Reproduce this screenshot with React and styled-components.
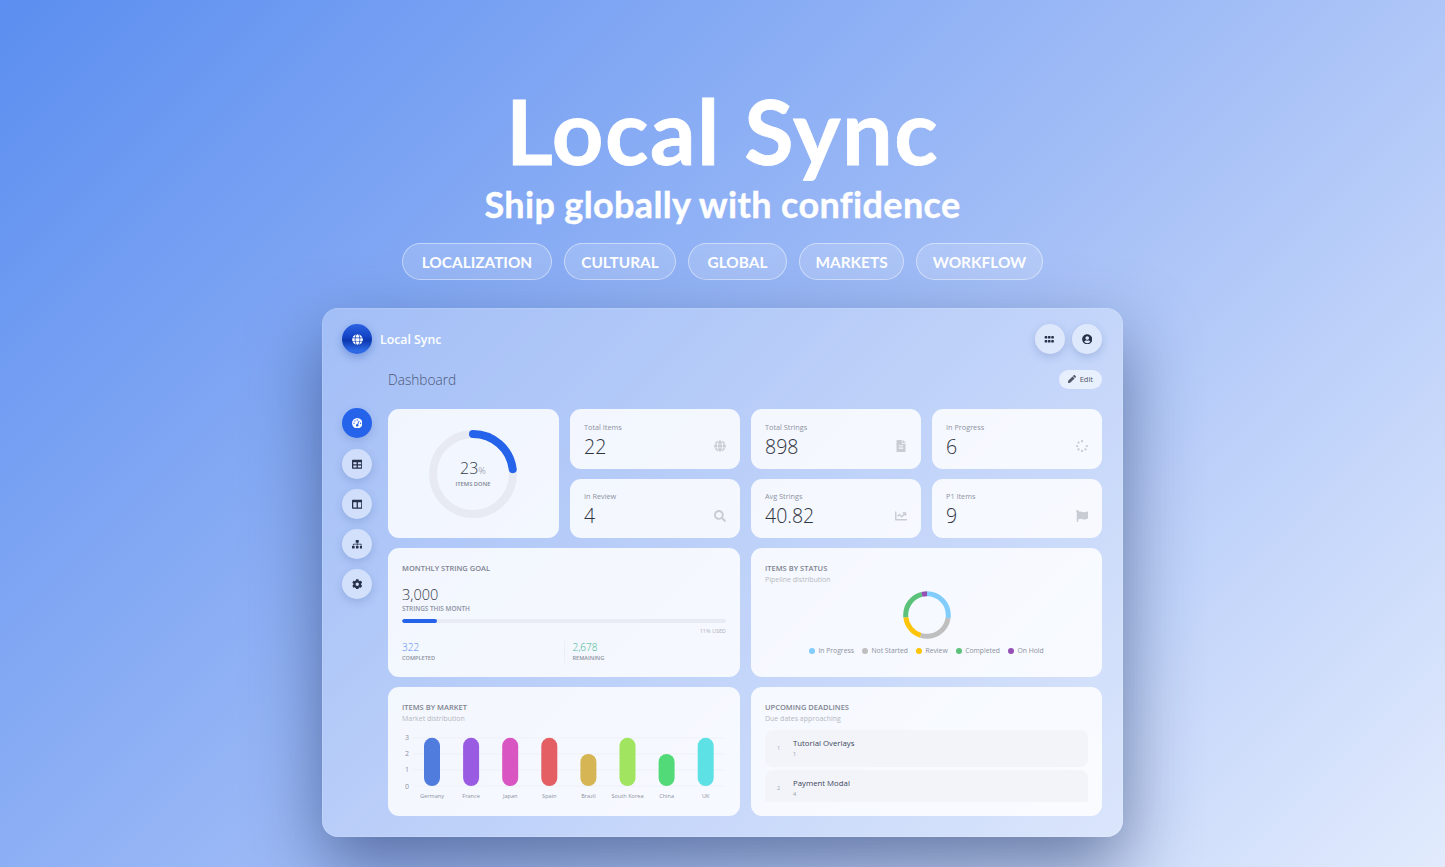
import React from 'react';
import styled, { createGlobalStyle } from 'styled-components';
import {
  FaGlobe,
  FaGripHorizontal,
  FaUserCircle,
  FaPen,
  FaTable,
  FaColumns,
  FaSitemap,
  FaCog,
  FaFileAlt,
  FaSpinner,
  FaSearch,
  FaChartLine,
  FaFlag,
} from 'react-icons/fa';
import { FaGaugeHigh } from 'react-icons/fa6';

const tags = [
  { label: 'LOCALIZATION', width: 150 },
  { label: 'CULTURAL', width: 112 },
  { label: 'GLOBAL', width: 99 },
  { label: 'MARKETS', width: 105 },
  { label: 'WORKFLOW', width: 127 },
];
const navIcons = [FaGaugeHigh, FaTable, FaColumns, FaSitemap, FaCog];

const stats = [
  { label: 'Total Items', value: '22', Icon: FaGlobe },
  { label: 'Total Strings', value: '898', Icon: FaFileAlt },
  { label: 'In Progress', value: '6', Icon: FaSpinner },
  { label: 'In Review', value: '4', Icon: FaSearch },
  { label: 'Avg Strings', value: '40.82', Icon: FaChartLine },
  { label: 'P1 Items', value: '9', Icon: FaFlag },
];

const statuses = [
  { name: 'In Progress', count: 6, color: '#81ccfb' },
  { name: 'Not Started', count: 6, color: '#bfbfbf' },
  { name: 'Review', count: 4, color: '#fcc40a' },
  { name: 'Completed', count: 5, color: '#5cc27a' },
  { name: 'On Hold', count: 1, color: '#9550b5' },
];

const markets = [
  { name: 'Germany', value: 3, color: '#4f7cdd' },
  { name: 'France', value: 3, color: '#9a5be3' },
  { name: 'Japan', value: 3, color: '#d955c2' },
  { name: 'Spain', value: 3, color: '#e35f63' },
  { name: 'Brazil', value: 2, color: '#d6b654' },
  { name: 'South Korea', value: 3, color: '#a0e45f' },
  { name: 'China', value: 2, color: '#53da78' },
  { name: 'UK', value: 3, color: '#5ee1e4' },
];

const deadlines = [
  { rank: 1, name: 'Tutorial Overlays', days: 1 },
  { rank: 2, name: 'Payment Modal', days: 4 },
];

const GlobalStyle = createGlobalStyle`
  html, body {
    margin: 0;
    padding: 0;
    overflow: hidden;
  }
  * {
    box-sizing: border-box;
  }
`;

const Stage = styled.div`
  width: 1445px;
  height: 867px;
  overflow: hidden;
  display: flex;
  flex-direction: column;
  align-items: center;
  padding-top: 82px;
  background: linear-gradient(135deg, #5b8ef0 0%, #9dbaf6 50%, #e2ebfd 100%);
  font-family: 'Open Sans', 'Noto Sans', sans-serif;
`;

const HeroTitle = styled.h1`
  margin: 0;
  font-family: 'Lato', sans-serif;
  font-size: 90px;
  line-height: 96px;
  font-weight: 700;
  letter-spacing: 1.5px;
  color: #fff;
  -webkit-text-stroke: 0.8px #fff;
`;

const HeroSubtitle = styled.h2`
  margin: 4px 0 0;
  font-family: 'Lato', sans-serif;
  font-size: 36px;
  line-height: 44px;
  font-weight: 700;
  letter-spacing: 0.35px;
  color: #fff;
  -webkit-text-stroke: 0.4px #fff;
`;

const TagRow = styled.div`
  display: flex;
  gap: 12px;
  margin-top: 17px;
`;

const Tag = styled.span`
  width: ${({ $width }) => $width}px;
  height: 37px;
  display: flex;
  align-items: center;
  justify-content: center;
  border-radius: 19px;
  border: 1px solid rgba(255, 255, 255, 0.45);
  background: rgba(255, 255, 255, 0.16);
  font-family: 'Lato', sans-serif;
  font-size: 15.4px;
  font-weight: 700;
  color: #fff;
`;

const Window = styled.div`
  width: 801px;
  height: 529px;
  margin-top: 28px;
  padding: 16px 21px 22px 20px;
  border-radius: 16px;
  background: rgba(255, 255, 255, 0.28);
  box-shadow: 0 30px 70px rgba(25, 45, 95, 0.55), inset 0 0 0 1px rgba(255, 255, 255, 0.12);
`;

const TopBar = styled.div`
  display: flex;
  align-items: center;
  justify-content: space-between;
`;

const Brand = styled.div`
  display: flex;
  align-items: center;
  gap: 8px;
  font-size: 12.3px;
  font-weight: 600;
  color: #fff;
`;

const BrandLogo = styled.div`
  width: 30px;
  height: 30px;
  border-radius: 50%;
  display: flex;
  align-items: center;
  justify-content: center;
  color: #fff;
  font-size: 11px;
  background: linear-gradient(180deg, #2a62e2 0%, #1546c8 40%, #0c38b0 55%, #2e6ae6 88%, #2a62e2 100%);
  box-shadow: 0 3px 8px rgba(30, 70, 170, 0.35);
`;

const TopActions = styled.div`
  display: flex;
  gap: 7.5px;
`;

const RoundButton = styled.div`
  width: 30px;
  height: 30px;
  flex: none;
  border-radius: 50%;
  display: flex;
  align-items: center;
  justify-content: center;
  font-size: 10.5px;
  margin-bottom: ${({ $active }) => ($active ? '1px' : '0')};
  color: ${({ $active }) => ($active ? '#fff' : '#27314a')};
  background: ${({ $active }) => ($active ? '#2563eb' : 'rgba(255, 255, 255, 0.45)')};
  box-shadow: 0 3px 8px rgba(50, 80, 150, 0.22);
`;

const Body = styled.div`
  display: flex;
  gap: 16px;
  margin-top: 11px;
`;

const SideNav = styled.nav`
  display: flex;
  flex-direction: column;
  gap: 10px;
  padding-top: 43px;
`;

const Main = styled.main`
  flex: 1;
  min-width: 0;
`;

const TitleRow = styled.div`
  height: 28px;
  margin-bottom: 16px;
  display: flex;
  align-items: center;
  justify-content: space-between;
`;

const PageTitle = styled.div`
  font-size: 13.7px;
  font-weight: 300;
  color: #4c5878;
`;

const EditButton = styled.div`
  height: 19px;
  padding: 0 9px;
  display: flex;
  align-items: center;
  gap: 4px;
  border-radius: 10px;
  background: rgba(255, 255, 255, 0.6);
  font-size: 7.5px;
  font-weight: 500;
  color: #4e5668;
  svg {
    font-size: 8px;
  }
`;

const Grid = styled.div`
  display: grid;
  grid-template-columns: 171px 170px 170px 170px;
  grid-template-rows: 59.5px 59.5px 129px 128.5px;
  column-gap: 11px;
  row-gap: 10px;
`;

const Card = styled.section`
  position: relative;
  border-radius: 11px;
  background: rgba(255, 255, 255, 0.84);
  overflow: hidden;
`;

const RingCard = styled(Card)`
  grid-row: span 2;
  display: flex;
  align-items: center;
  justify-content: center;
  padding-right: 1px;
`;

const RingCaption = styled.div`
  position: absolute;
  inset: 0 1px 0 0;
  display: flex;
  flex-direction: column;
  align-items: center;
  justify-content: center;
`;

const RingValue = styled.div`
  font-size: 16px;
  line-height: 19px;
  font-weight: 300;
  color: #333a48;
  span {
    font-size: 9.5px;
    color: #7e8594;
  }
`;

const RingLabel = styled.div`
  font-size: 5.8px;
  font-weight: 600;
  color: #7e8594;
`;

const StatCard = styled(Card)`
  display: flex;
  justify-content: space-between;
  padding: 12.5px 14px 0;
`;

const StatLabel = styled.div`
  font-size: 7.3px;
  line-height: 10px;
  color: #8d929e;
`;

const StatValue = styled.div`
  margin-top: 2px;
  font-size: 19.5px;
  line-height: 25px;
  font-weight: 300;
  color: #2f3441;
`;

const StatIcon = styled.div`
  display: flex;
  margin-top: 18.5px;
  font-size: 12px;
  color: #c9ccd2;
`;

const WideCard = styled(Card)`
  grid-column: span 2;
  padding: 14px;
`;

const CardTitle = styled.div`
  font-size: 7.5px;
  line-height: 12px;
  font-weight: 600;
  color: #7e838f;
  text-transform: uppercase;
`;

const CardSubtitle = styled.div`
  font-size: 7px;
  line-height: 11px;
  color: #b5b8c0;
`;

const GoalValue = styled.div`
  margin-top: 12px;
  font-size: 14.5px;
  line-height: 18px;
  font-weight: 300;
  color: #343a48;
`;

const MicroLabel = styled.div`
  font-size: ${({ $large }) => ($large ? '6.4px' : '5.6px')};
  line-height: 9px;
  font-weight: 600;
  color: #8d929e;
  text-transform: uppercase;
`;

const Track = styled.div`
  height: 4px;
  margin-top: 6px;
  border-radius: 2px;
  background: #e8ebf3;
  overflow: hidden;
`;

const Fill = styled.div`
  height: 100%;
  border-radius: 2px;
  background: #2563eb;
`;

const UsedLabel = styled.div`
  margin-top: 4px;
  text-align: right;
  font-size: 5.5px;
  line-height: 8px;
  color: #b0b3bb;
`;

const GoalStats = styled.div`
  display: grid;
  grid-template-columns: 1fr 1fr;
  margin-top: 6px;
`;

const GoalStat = styled.div`
  padding-left: ${({ $divided }) => ($divided ? '7.5px' : '0')};
  border-left: ${({ $divided }) => ($divided ? '1px solid #eceff5' : 'none')};
`;

const GoalNumber = styled.div`
  font-size: 10px;
  line-height: 13px;
  font-weight: 300;
  color: ${({ $color }) => $color};
`;

const DonutWrap = styled.div`
  display: flex;
  justify-content: center;
  margin-top: 6px;
`;

const Legend = styled.div`
  display: flex;
  justify-content: center;
  gap: 8.5px;
  margin-top: 7px;
`;

const LegendItem = styled.div`
  display: flex;
  align-items: center;
  gap: 3px;
  font-size: 6.8px;
  line-height: 10px;
  color: #8d929e;
`;

const Dot = styled.span`
  width: 6px;
  height: 6px;
  border-radius: 50%;
  background: ${({ $color }) => $color};
`;

const ChartWrap = styled.div`
  margin-top: 3px;
`;

const DeadlineList = styled.div`
  height: 72px;
  margin-top: 6px;
  overflow: hidden;
  display: flex;
  flex-direction: column;
  gap: 3px;
`;

const DeadlineRow = styled.div`
  flex: none;
  height: 37px;
  display: flex;
  align-items: center;
  padding: 0 0 1px 12px;
  gap: 12px;
  border-radius: 8px;
  background: #f2f4fa;
`;

const DeadlineRank = styled.div`
  width: 4px;
  font-size: 5.5px;
  color: #a5a9b2;
`;

const DeadlineName = styled.div`
  font-size: 7.8px;
  line-height: 12px;
  color: #41465a;
`;

const DeadlineDays = styled.div`
  font-size: 5.5px;
  line-height: 10px;
  color: #9a9ea8;
`;

const ProgressRing = () => {
  const r = 40;
  const c = 2 * Math.PI * r;
  return (
    <svg width="88" height="88" viewBox="0 0 88 88">
      <circle cx="44" cy="44" r={r} fill="none" stroke="#e7eaf2" strokeWidth="8" />
      <circle
        cx="44"
        cy="44"
        r={r}
        fill="none"
        stroke="#2563eb"
        strokeWidth="8"
        strokeLinecap="round"
        strokeDasharray={`${c * 0.23} ${c}`}
        transform="rotate(-90 44 44)"
      />
    </svg>
  );
};

const StatusDonut = () => {
  const r = 21.3;
  const c = 2 * Math.PI * r;
  const total = statuses.reduce((sum, s) => sum + s.count, 0);
  let offset = 0;
  return (
    <svg width="48" height="48" viewBox="0 0 48 48">
      {statuses.map((s) => {
        const len = (s.count / total) * c;
        const el = (
          <circle
            key={s.name}
            cx="24"
            cy="24"
            r={r}
            fill="none"
            stroke={s.color}
            strokeWidth="5"
            strokeDasharray={`${len} ${c - len}`}
            strokeDashoffset={-offset}
            transform="rotate(-90 24 24)"
          />
        );
        offset += len;
        return el;
      })}
    </svg>
  );
};

const MarketChart = () => {
  const unit = 16.05;
  const base = 59;
  return (
    <svg width="324" height="76" viewBox="0 0 324 76">
      {[0, 1, 2, 3].map((t) => (
        <g key={t}>
          <line x1="11" x2="323" y1={base - t * unit} y2={base - t * unit} stroke="#eef1f7" />
          <text x="5" y={base - t * unit + 2.5} fontSize="7" textAnchor="middle" fill="#8d929e">
            {t}
          </text>
        </g>
      ))}
      {markets.map((m, i) => {
        const cx = 30 + i * 39.1;
        const h = m.value * unit;
        return (
          <g key={m.name}>
            <rect x={cx - 8} y={base - h} width="16" height={h} rx="8" fill={m.color} />
            <text x={cx} y={base + 12} fontSize="5.6" textAnchor="middle" fill="#8d929e">
              {m.name}
            </text>
          </g>
        );
      })}
    </svg>
  );
};

const App = () => {
  return (
    <Stage>
      <GlobalStyle />
      <HeroTitle>Local Sync</HeroTitle>
      <HeroSubtitle>Ship globally with confidence</HeroSubtitle>
      <TagRow>
        {tags.map((t) => (
          <Tag key={t.label} $width={t.width}>
            {t.label}
          </Tag>
        ))}
      </TagRow>
      <Window>
        <TopBar>
          <Brand>
            <BrandLogo>
              <FaGlobe />
            </BrandLogo>
            Local Sync
          </Brand>
          <TopActions>
            <RoundButton>
              <FaGripHorizontal />
            </RoundButton>
            <RoundButton>
              <FaUserCircle />
            </RoundButton>
          </TopActions>
        </TopBar>
        <Body>
          <SideNav>
            {navIcons.map((Icon, i) => (
              <RoundButton key={i} $active={i === 0}>
                <Icon />
              </RoundButton>
            ))}
          </SideNav>
          <Main>
            <TitleRow>
              <PageTitle>Dashboard</PageTitle>
              <EditButton>
                <FaPen />
                Edit
              </EditButton>
            </TitleRow>
            <Grid>
              <RingCard>
                <ProgressRing />
                <RingCaption>
                  <RingValue>
                    23<span>%</span>
                  </RingValue>
                  <RingLabel>ITEMS DONE</RingLabel>
                </RingCaption>
              </RingCard>
              {stats.map(({ label, value, Icon }) => (
                <StatCard key={label}>
                  <div>
                    <StatLabel>{label}</StatLabel>
                    <StatValue>{value}</StatValue>
                  </div>
                  <StatIcon>
                    <Icon />
                  </StatIcon>
                </StatCard>
              ))}
              <WideCard>
                <CardTitle>Monthly String Goal</CardTitle>
                <GoalValue>3,000</GoalValue>
                <MicroLabel $large>Strings this month</MicroLabel>
                <Track>
                  <Fill style={{ width: `${(322 / 3000) * 100}%` }} />
                </Track>
                <UsedLabel>11% USED</UsedLabel>
                <GoalStats>
                  <GoalStat>
                    <GoalNumber $color="#5b8def">322</GoalNumber>
                    <MicroLabel>Completed</MicroLabel>
                  </GoalStat>
                  <GoalStat $divided>
                    <GoalNumber $color="#3fb68b">2,678</GoalNumber>
                    <MicroLabel>Remaining</MicroLabel>
                  </GoalStat>
                </GoalStats>
              </WideCard>
              <WideCard>
                <CardTitle>Items by Status</CardTitle>
                <CardSubtitle>Pipeline distribution</CardSubtitle>
                <DonutWrap>
                  <StatusDonut />
                </DonutWrap>
                <Legend>
                  {statuses.map((s) => (
                    <LegendItem key={s.name}>
                      <Dot $color={s.color} />
                      {s.name}
                    </LegendItem>
                  ))}
                </Legend>
              </WideCard>
              <WideCard>
                <CardTitle>Items by Market</CardTitle>
                <CardSubtitle>Market distribution</CardSubtitle>
                <ChartWrap>
                  <MarketChart />
                </ChartWrap>
              </WideCard>
              <WideCard>
                <CardTitle>Upcoming Deadlines</CardTitle>
                <CardSubtitle>Due dates approaching</CardSubtitle>
                <DeadlineList>
                  {deadlines.map((d) => (
                    <DeadlineRow key={d.rank}>
                      <DeadlineRank>{d.rank}</DeadlineRank>
                      <div>
                        <DeadlineName>{d.name}</DeadlineName>
                        <DeadlineDays>{d.days}</DeadlineDays>
                      </div>
                    </DeadlineRow>
                  ))}
                </DeadlineList>
              </WideCard>
            </Grid>
          </Main>
        </Body>
      </Window>
    </Stage>
  );
};

export default App;
